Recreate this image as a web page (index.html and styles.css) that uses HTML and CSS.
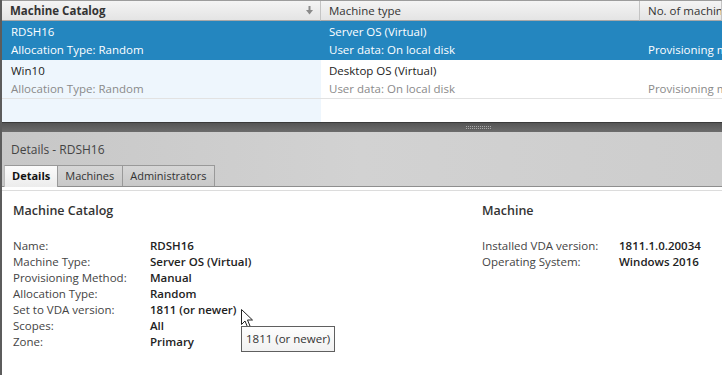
FILE: index.html
```html
<!DOCTYPE html>
<html lang="en">
<head>
    <meta charset="UTF-8">
    <title>Machine Catalogs</title>
    <link rel="stylesheet" href="styles.css">
</head>
<body>
    <div class="app">
        <div class="catalog-grid">
            <div class="head-cell sortable">Machine Catalog
                <svg class="sort-arrow" width="7" height="9" viewBox="0 0 7 9">
                    <rect x="2.5" y="0" width="2" height="5" fill="#8a8a8a"/>
                    <polygon points="0,4 7,4 3.5,8.5" fill="#8a8a8a"/>
                </svg>
            </div>
            <div class="head-cell">Machine type</div>
            <div class="head-cell">No. of machines</div>

            <div class="cell first selected">
                <span class="main">RDSH16</span>
                <span class="sub">Allocation Type: Random</span>
            </div>
            <div class="cell selected">
                <span class="main">Server OS (Virtual)</span>
                <span class="sub">User data: On local disk</span>
            </div>
            <div class="cell selected">
                <span class="main">&nbsp;</span>
                <span class="sub">Provisioning method: Manual</span>
            </div>

            <div class="cell first">
                <span class="main">Win10</span>
                <span class="sub">Allocation Type: Random</span>
            </div>
            <div class="cell">
                <span class="main">Desktop OS (Virtual)</span>
                <span class="sub">User data: On local disk</span>
            </div>
            <div class="cell">
                <span class="main">&nbsp;</span>
                <span class="sub">Provisioning method: Manual</span>
            </div>

            <div class="filler first"></div>
            <div class="filler"></div>
            <div class="filler"></div>
        </div>

        <div class="splitter"><span class="grip"></span></div>

        <div class="details-head">
            <div class="details-title">Details - RDSH16</div>
            <div class="tabs">
                <div class="tab active">Details</div>
                <div class="tab">Machines</div>
                <div class="tab">Administrators</div>
                <div class="tab-rest"></div>
            </div>
        </div>

        <div class="details-body">
            <section class="block catalog-block">
                <h3>Machine Catalog</h3>
                <dl class="props">
                    <dt>Name:</dt><dd>RDSH16</dd>
                    <dt>Machine Type:</dt><dd>Server OS (Virtual)</dd>
                    <dt>Provisioning Method:</dt><dd>Manual</dd>
                    <dt>Allocation Type:</dt><dd>Random</dd>
                    <dt>Set to VDA version:</dt><dd class="hovered">1811 (or newer)
                        <svg class="cursor" width="13" height="20" viewBox="0 0 13 20">
                            <path d="M0.5 0.5 L0.5 15.5 L4 12 L6.5 18 L9 17 L6.5 11 L11.5 11 Z" fill="#fff" stroke="#222" stroke-width="1"/>
                        </svg>
                        <span class="tooltip">1811 (or newer)</span>
                    </dd>
                    <dt>Scopes:</dt><dd>All</dd>
                    <dt>Zone:</dt><dd>Primary</dd>
                </dl>
            </section>
            <section class="block machine-block">
                <h3>Machine</h3>
                <dl class="props">
                    <dt>Installed VDA version:</dt><dd>1811.1.0.20034</dd>
                    <dt>Operating System:</dt><dd>Windows 2016</dd>
                </dl>
            </section>
        </div>
    </div>
</body>
</html>
```

FILE: styles.css
```css
body {
    margin: 0;
    font-family: 'Open Sans', 'Noto Sans', sans-serif;
    font-size: 11.5px;
    color: #333;
    background-color: #fff;
    overflow: hidden;
}

.app {
    width: 722px;
    height: 375px;
    border-left: 2px solid #5c5c5c;
    box-sizing: border-box;
    display: flex;
    flex-direction: column;
    overflow: hidden;
}

/* top grid */
.catalog-grid {
    display: grid;
    grid-template-columns: 319px 319px 1fr;
    grid-template-rows: 20px 39px 39px 23px;
    border-top: 1px solid #9c9c9c;
    overflow: hidden;
}

.head-cell {
    position: relative;
    padding-left: 8px;
    line-height: 19px;
    background: linear-gradient(#f4f4f4, #e4e4e4);
    border-bottom: 1px solid #a8a8a8;
    border-right: 1px solid #c4c4c4;
    color: #333;
    white-space: nowrap;
    overflow: hidden;
}

.head-cell.sortable {
    font-weight: bold;
}

.sort-arrow {
    position: absolute;
    right: 7px;
    top: 5px;
}

.cell {
    display: flex;
    flex-direction: column;
    padding: 2px 0 0 8px;
    border-bottom: 1px solid #e2e2e2;
    white-space: nowrap;
    overflow: hidden;
    color: #222;
}

.cell.first {
    padding-left: 9px;
    background-color: #eef6fd;
}

.cell .main,
.cell .sub {
    line-height: 18px;
}

.cell .sub {
    color: #8a8a8a;
}

.cell.selected {
    background-color: #2486bf;
    color: #fff;
    border-bottom-color: #2486bf;
}

.cell.selected .sub {
    color: #fff;
}

.filler.first {
    background-color: #eef6fd;
}

.splitter {
    height: 9px;
    border-top: 1px solid #3a3a3a;
    background: linear-gradient(#555, #6c6c6c);
    display: flex;
    justify-content: center;
    align-items: center;
    padding-left: 234px;
}

.grip {
    width: 26px;
    height: 4px;
    background:
        repeating-linear-gradient(0deg, #5f5f5f 0 1px, transparent 1px 2px),
        repeating-linear-gradient(90deg, #a9a9a9 0 1px, transparent 1px 2px);
}

/* details header */
.details-head {
    background: linear-gradient(90deg, #c7c7c7, #d2d2d2 50%, #cdcdcd);
    border-bottom: 1px solid #8e8e8e;
}

.details-title {
    padding: 9px 0 0 9px;
    height: 24px;
    color: #444;
    font-size: 12px;
}

.tabs {
    display: flex;
    padding-left: 2px;
    height: 21px;
    font-size: 11px;
}

.tab {
    padding: 0 8px 0 7px;
    line-height: 20px;
    background: linear-gradient(#d6d6d6, #c8c8c8);
    border: 1px solid #999;
    border-bottom: none;
    border-left: none;
    color: #333;
}

.tab.active {
    background: linear-gradient(#fbfbfb, #ececec);
    font-weight: bold;
    color: #111;
    border-left: 1px solid #bbb;
    height: 21px;
    margin-bottom: -1px;
    padding: 0 7px 0 7px;
}

.tab-rest {
    flex: 1;
}

/* details body */
.details-body {
    flex: 1;
    display: flex;
    padding: 0 0 0 11px;
    border-top: 3px solid #fff;
    box-shadow: inset 0 1px 0 #dcdcdc;
    position: relative;
}

.block h3 {
    margin: 12px 0 0;
    font-size: 12.5px;
    font-weight: 600;
    color: #333;
    line-height: 17px;
}

.catalog-block {
    width: 469px;
}

.props {
    display: grid;
    grid-template-columns: 137px 1fr;
    margin: 19px 0 0;
    line-height: 16px;
}

.props dt {
    color: #444;
}

.props dd {
    margin: 0;
    font-weight: 600;
    color: #222;
    white-space: nowrap;
}

.hovered {
    position: relative;
}

.cursor {
    position: absolute;
    left: 91px;
    top: 7px;
}

.tooltip {
    position: absolute;
    left: 91px;
    top: 24px;
    padding: 4px;
    line-height: 16px;
    font-weight: normal;
    color: #333;
    background: linear-gradient(#fdfdfd, #f1f1f1);
    border: 1px solid #5f5f5f;
    z-index: 2;
}
```
